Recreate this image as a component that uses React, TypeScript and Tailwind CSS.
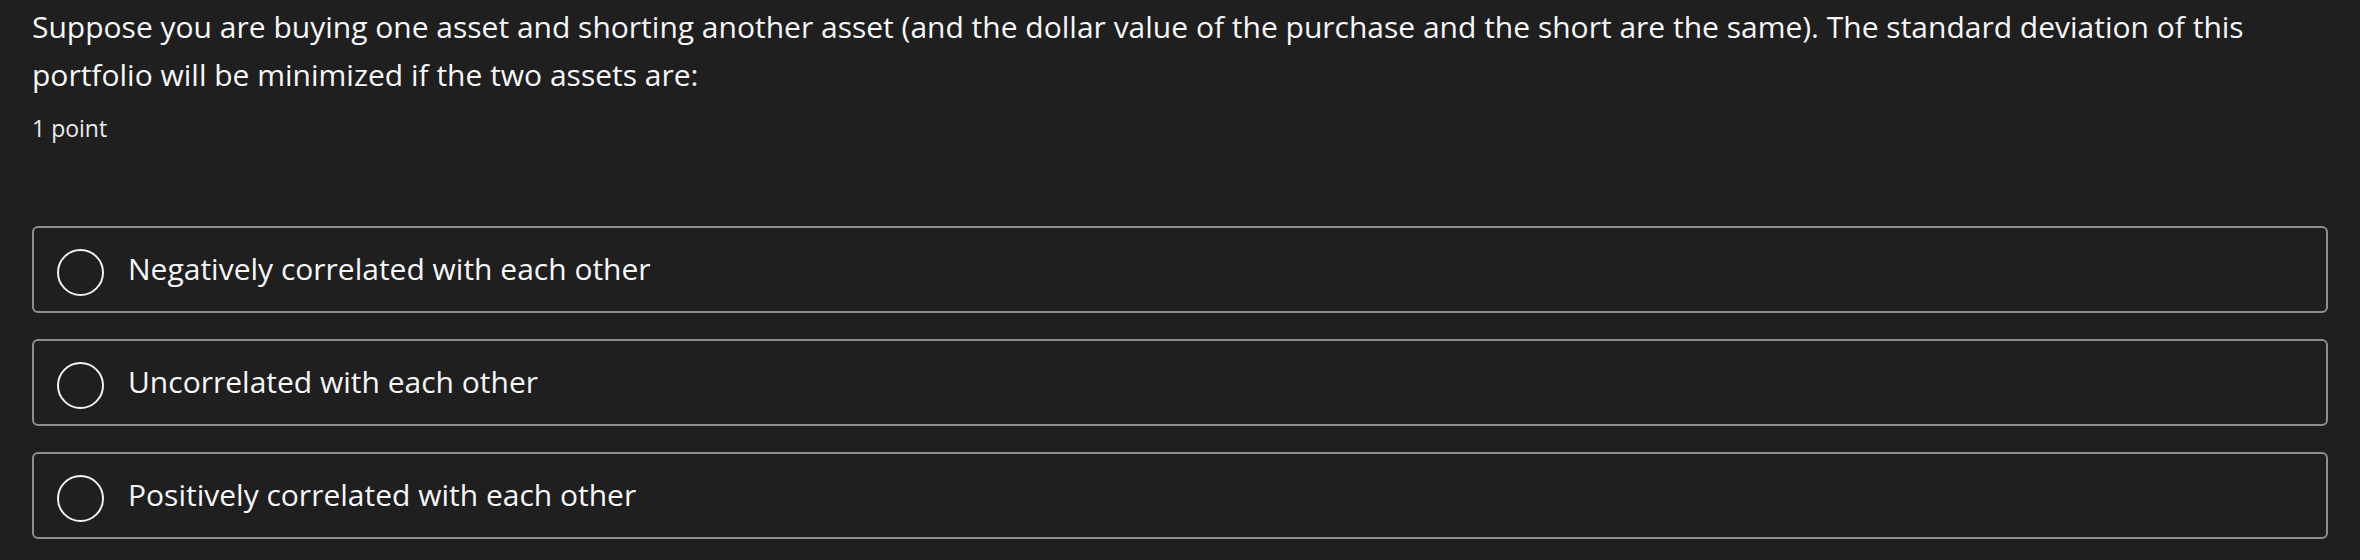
import React from "react";

const options = [
  "Negatively correlated with each other",
  "Uncorrelated with each other",
  "Positively correlated with each other",
];

export default function App() {
  return (
    <div
      className="w-[2360px] h-[560px] overflow-hidden bg-[#1f1f1f] text-[#f7f7f7] px-8 pt-[3px]"
      style={{ fontFamily: '"Open Sans", "Liberation Sans", sans-serif' }}
    >
      <p className="text-[30px] leading-[48px]">
        Suppose you are buying one asset and shorting another asset (and the dollar value of the purchase and the short are the same). The standard deviation of this portfolio will be minimized if the two assets are:
      </p>
      <div className="mt-[12px] text-[23px] leading-[34.5px] text-[#ebebeb]">1 point</div>
      <div className="mt-[80px] flex flex-col gap-[26px]">
        {options.map((o) => (
          <div
            key={o}
            className="h-[87px] rounded-[6px] border-2 border-[#8e8e8e] flex items-center pl-[23px]"
          >
            <span className="w-[47px] h-[47px] rounded-full border-2 border-[#f2f2f2] mt-[6px] shrink-0" />
            <span className="ml-[24px] text-[30px] leading-[48px]">{o}</span>
          </div>
        ))}
      </div>
    </div>
  );
}
